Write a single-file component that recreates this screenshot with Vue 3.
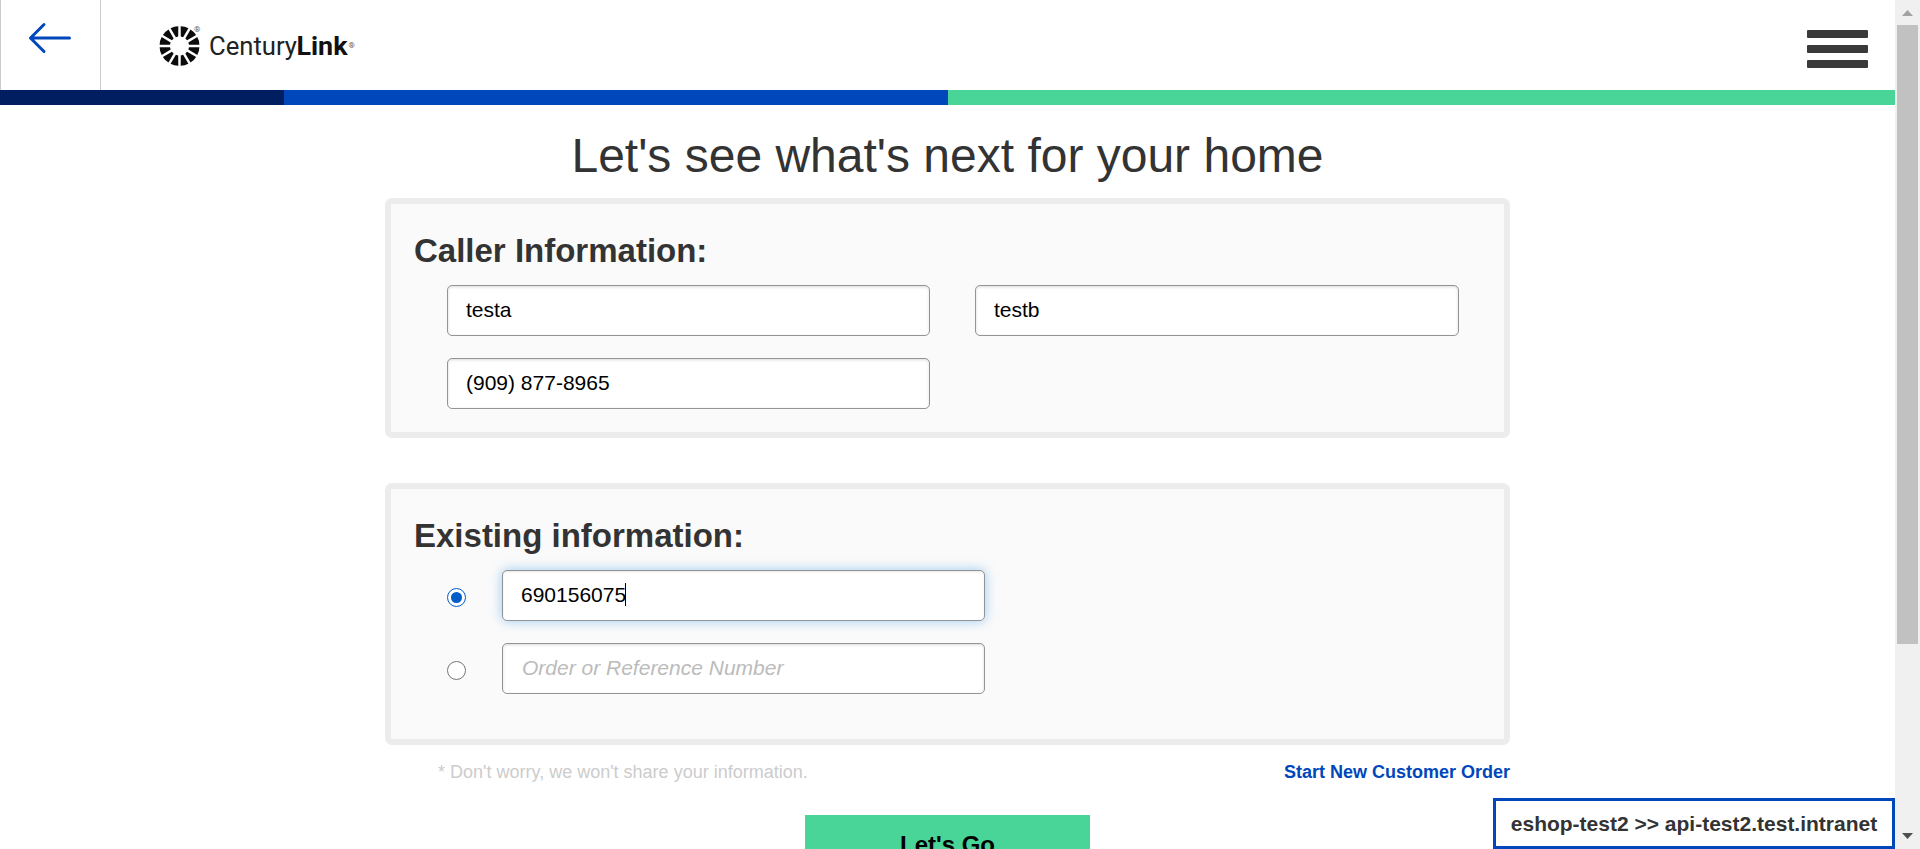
<script setup>
import { ref } from 'vue'

const firstName = ref('testa')
const lastName = ref('testb')
const phone = ref('(909) 877-8965')
const account = ref('690156075')
const order = ref('')
const lookup = ref('account')

const rays = Array.from({ length: 12 }, (_, i) => 15 + i * 30)
</script>

<template>
  <div class="window">
    <main class="page">
      <header class="header">
        <a class="back" aria-label="Back">
          <svg width="44" height="32" viewBox="0 0 44 32">
            <path d="M2.5 16H41.5M16 2.5L2.5 16L16 29.500" />
          </svg>
        </a>
        <svg class="logo" width="210" height="50" viewBox="0 0 210 50">
          <g transform="translate(24.5 25)">
            <path v-for="a in rays" :key="a" d="M-1.2 -9.500L-4 -19.500Q0 -20.600 4 -19.500L1.2 -9.500Z" :transform="`rotate(${a})`" />
          </g>
          <text class="reg" x="39" y="11">®</text>
          <text x="54" y="34" textLength="88" lengthAdjust="spacingAndGlyphs">Century</text>
          <text class="strong" x="141.500" y="34" textLength="51" lengthAdjust="spacingAndGlyphs">Link</text>
          <text class="reg" x="193.500" y="27">®</text>
        </svg>
        <button class="menu" aria-label="Menu"><i /><i /><i /></button>
      </header>
      <div class="stripe"><i class="navy" /><i class="blue" /><i class="green" /></div>

      <div class="content">
        <h1>Let's see what's next for your home</h1>

        <section class="panel caller">
          <h2>Caller Information:</h2>
          <div class="grid">
            <input v-model="firstName" class="field" type="text">
            <input v-model="lastName" class="field" type="text">
            <input v-model="phone" class="field" type="text">
          </div>
        </section>

        <section class="panel existing">
          <h2>Existing information:</h2>
          <div class="choices">
            <div class="choice">
              <span class="radio" :class="{ on: lookup === 'account' }" />
              <div class="holder">
                <input v-model="account" class="field focused" type="text">
                <i class="caret" />
              </div>
            </div>
            <div class="choice">
              <span class="radio" :class="{ on: lookup === 'order' }" />
              <div class="holder">
                <input v-model="order" class="field" type="text" placeholder="Order or Reference Number">
              </div>
            </div>
          </div>
        </section>

        <div class="notes">
          <span class="privacy">* Don't worry, we won't share your information.</span>
          <a class="link">Start New Customer Order</a>
        </div>
        <button class="go">Let's Go</button>
      </div>
    </main>

    <aside class="scrollbar">
      <svg width="25" height="25" viewBox="0 0 25 25"><path fill="#a3a3a3" d="M7 16L12.500 10L18 16Z" /></svg>
      <div class="track"><div class="thumb" /></div>
      <svg width="25" height="25" viewBox="0 0 25 25"><path fill="#505050" d="M7 9L12.500 15L18 9Z" /></svg>
    </aside>

    <div class="environment">eshop-test2 &gt;&gt; api-test2.test.intranet</div>
  </div>
</template>

<style>
body {
  margin: 0;
  overflow: hidden;
}
</style>

<style scoped>
* {
  box-sizing: border-box;
}
.window {
  position: relative;
  display: flex;
  width: 1920px;
  height: 849px;
  overflow: hidden;
  background: #fff;
  color: #333;
  font-family: "Liberation Sans", Arial, sans-serif;
}
.page {
  width: 1895px;
  height: 849px;
  overflow: hidden;
}
.header {
  display: flex;
  height: 90px;
}
.back {
  width: 101px;
  border: solid #ccc;
  border-width: 0 1px;
  padding: 22px 0 0 27px;
}
.back svg {
  display: block;
  fill: none;
  stroke: #0047bb;
  stroke-width: 3;
  stroke-linecap: round;
  stroke-linejoin: round;
}
.logo {
  margin: 21px 0 0 54px;
  fill: #0c0c0c;
}
.logo text {
  font: 400 25px Roboto, sans-serif;
  fill: #222;
}
.logo .strong {
  font-weight: 700;
  fill: #111;
}
.logo .reg {
  font-size: 8px;
  fill: #555;
}
.menu {
  display: flex;
  flex-direction: column;
  gap: 7px;
  margin: 30px 27px 0 auto;
  padding: 0;
  border: 0;
  background: none;
}
.menu i {
  width: 61px;
  height: 8px;
  border-radius: 1px;
  background: #3a3a3a;
}
.stripe {
  display: flex;
  height: 15px;
}
.navy {
  width: 284px;
  background: #001e60;
}
.blue {
  width: 664px;
  background: #0047bb;
}
.green {
  flex: 1;
  background: #48d597;
}
.content {
  display: flex;
  flex-direction: column;
  width: 1125px;
  margin: 0 auto;
}
h1 {
  margin: 21px 0 12px;
  font-size: 48px;
  font-weight: 400;
  line-height: 60px;
  text-align: center;
}
.panel {
  border: 6px solid #ececec;
  border-radius: 7px;
  background: #fafafa;
}
.caller {
  height: 240px;
  margin-bottom: 45px;
}
.existing {
  height: 262px;
}
h2 {
  margin: 27px 0 14px 23px;
  font-size: 33px;
  font-weight: 700;
  line-height: 40px;
}
.grid {
  display: grid;
  grid-template-columns: 483px 484px;
  gap: 22px 45px;
  margin-left: 56px;
}
.field {
  display: block;
  width: 100%;
  height: 51px;
  margin: 0;
  padding: 0 18px 2px;
  border: 1px solid #949494;
  border-radius: 5px;
  outline: 0;
  background: #fff;
  box-shadow: inset 0 1px 3px rgba(0, 0, 0, 0.15);
  color: #000;
  font: 21px "Liberation Sans", Arial, sans-serif;
}
.field::placeholder {
  color: #bbb;
  font-style: italic;
  text-indent: 1px;
  opacity: 1;
}
.focused {
  box-shadow: inset 0 1px 2px rgba(0, 0, 0, 0.1), 0 0 12px rgba(90, 170, 235, 0.6);
}
.choices {
  display: flex;
  flex-direction: column;
  gap: 22px;
  margin-left: 56px;
}
.choice {
  display: flex;
  align-items: center;
  gap: 36px;
}
.holder {
  position: relative;
  width: 483px;
}
.caret {
  position: absolute;
  left: 123px;
  top: 13px;
  width: 1px;
  height: 23px;
  background: #000;
}
.radio {
  display: grid;
  place-items: center;
  width: 19px;
  height: 19px;
  margin-top: 3px;
  border: 1px solid #767676;
  border-radius: 50%;
  background: #fff;
}
.radio.on {
  border-color: #005cc8;
}
.radio.on::after {
  width: 11px;
  height: 11px;
  border-radius: 50%;
  background: #005cc8;
  content: "";
}
.notes {
  display: flex;
  justify-content: space-between;
  margin-top: 17px;
  padding-left: 53px;
  font-size: 18px;
  line-height: 20px;
}
.privacy {
  color: #ccc;
}
.link {
  color: #0047bb;
  font-weight: 700;
}
.go {
  align-self: center;
  width: 285px;
  height: 60px;
  margin: 33px 0 0;
  padding: 0;
  border: 0;
  background: #48d597;
  color: #000;
  font: 700 24px/60px "Liberation Sans", Arial, sans-serif;
}
.scrollbar {
  display: flex;
  flex-direction: column;
  width: 25px;
  height: 849px;
  background: #f0f0f0;
}
.track {
  flex: 1;
  padding: 0 2px;
}
.thumb {
  height: 619px;
  background: #c1c1c1;
}
.environment {
  position: absolute;
  right: 25px;
  bottom: 0;
  width: 402px;
  height: 51px;
  border: 3px solid #0047bb;
  background: #fff;
  font-size: 21px;
  font-weight: 700;
  line-height: 45px;
  text-align: center;
}
</style>
